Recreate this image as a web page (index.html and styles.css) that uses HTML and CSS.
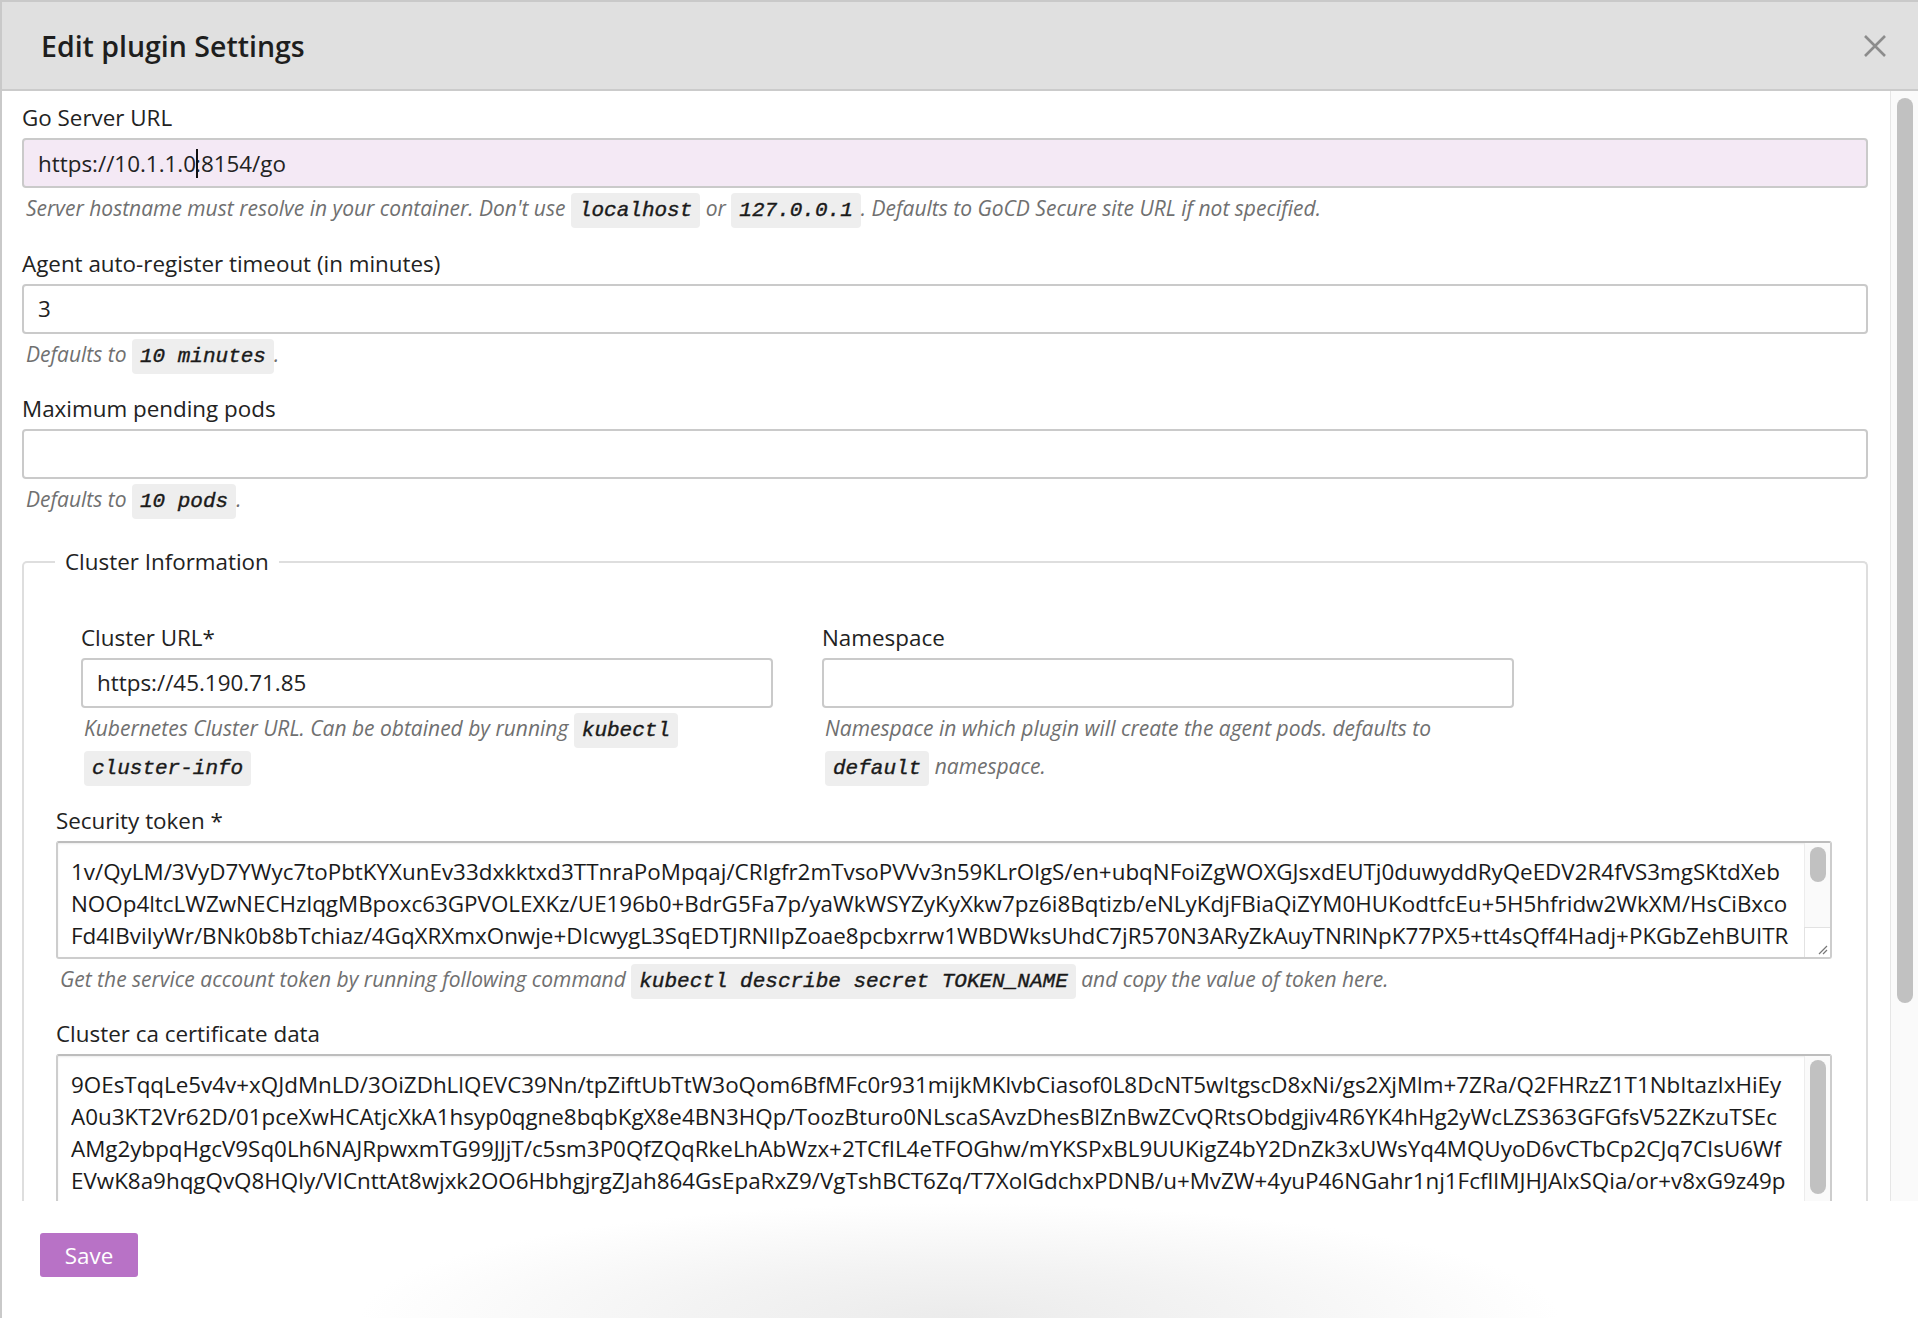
FILE: index.html
```html
<!DOCTYPE html>
<html lang="en">
<head>
<meta charset="utf-8">
<title>Edit plugin Settings</title>
<link rel="stylesheet" href="styles.css">
</head>
<body>
<div class="modal">
  <header class="modal-header">
    <h1 class="modal-title">Edit plugin Settings</h1>
    <button class="close-btn" aria-label="Close">
      <svg width="24" height="24" viewBox="0 0 24 24"><path d="M2 2 L22 22 M22 2 L2 22" stroke="#8c8c8c" stroke-width="2.6" fill="none" stroke-linecap="butt"/></svg>
    </button>
  </header>

  <div class="modal-body">
    <div class="body-content">
      <div class="form-group">
        <label class="field-label">Go Server URL</label>
        <div class="field-box focused"><span>https://10.1.1.0</span><span class="caret"></span><span>:8154/go</span></div>
        <p class="help">Server hostname must resolve in your container. Don't use <code>localhost</code> or <code>127.0.0.1</code>. Defaults to GoCD Secure site URL if not specified.</p>
      </div>

      <div class="form-group">
        <label class="field-label">Agent auto-register timeout (in minutes)</label>
        <div class="field-box">3</div>
        <p class="help">Defaults to <code>10 minutes</code>.</p>
      </div>

      <div class="form-group">
        <label class="field-label">Maximum pending pods</label>
        <div class="field-box"></div>
        <p class="help">Defaults to <code>10 pods</code>.</p>
      </div>

      <fieldset class="cluster">
        <legend class="legend">Cluster Information</legend>
        <div class="cluster-row">
          <div class="col">
            <label class="field-label">Cluster URL*</label>
            <div class="field-box">https://45.190.71.85</div>
            <p class="help">Kubernetes Cluster URL. Can be obtained by running <code>kubectl</code> <code>cluster-info</code></p>
          </div>
          <div class="col">
            <label class="field-label">Namespace</label>
            <div class="field-box"></div>
            <p class="help">Namespace in which plugin will create the agent pods. defaults to <code>default</code> namespace.</p>
          </div>
        </div>

        <div class="form-group">
          <label class="field-label">Security token *</label>
          <div class="textbox token">
            <div class="textbox-text">
              <div class="tline">1v/QyLM/3VyD7YWyc7toPbtKYXunEv33dxkktxd3TTnraPoMpqaj/CRIgfr2mTvsoPVVv3n59KLrOlgS/en+ubqNFoiZgWOXGJsxdEUTj0duwyddRyQeEDV2R4fVS3mgSKtdXeb</div>
              <div class="tline">NOOp4ltcLWZwNECHzlqgMBpoxc63GPVOLEXKz/UE196b0+BdrG5Fa7p/yaWkWSYZyKyXkw7pz6i8Bqtizb/eNLyKdjFBiaQiZYM0HUKodtfcEu+5H5hfridw2WkXM/HsCiBxco</div>
              <div class="tline">Fd4IBviIyWr/BNk0b8bTchiaz/4GqXRXmxOnwje+DIcwygL3SqEDTJRNIIpZoae8pcbxrrw1WBDWksUhdC7jR570N3ARyZkAuyTNRlNpK77PX5+tt4sQff4Hadj+PKGbZehBUITR</div>
            </div>
            <div class="tb-track">
              <div class="tb-thumb short"></div>
              <div class="tb-spacer"></div>
              <div class="resizer">
                <svg width="12" height="12" viewBox="0 0 12 12"><path d="M11 3 L3 11 M11 7 L7 11" stroke="#777" stroke-width="1.2" fill="none"/></svg>
              </div>
            </div>
          </div>
          <p class="help">Get the service account token by running following command <code>kubectl describe secret TOKEN_NAME</code> and copy the value of token here.</p>
        </div>

        <div class="form-group">
          <label class="field-label">Cluster ca certificate data</label>
          <div class="textbox cert">
            <div class="textbox-text">
              <div class="tline">9OEsTqqLe5v4v+xQJdMnLD/3OiZDhLlQEVC39Nn/tpZiftUbTtW3oQom6BfMFc0r931mijkMKlvbCiasof0L8DcNT5wItgscD8xNi/gs2XjMlm+7ZRa/Q2FHRzZ1T1NbItazIxHiEy</div>
              <div class="tline">A0u3KT2Vr62D/01pceXwHCAtjcXkA1hsyp0qgne8bqbKgX8e4BN3HQp/ToozBturo0NLscaSAvzDhesBlZnBwZCvQRtsObdgjiv4R6YK4hHg2yWcLZS363GFGfsV52ZKzuTSEc</div>
              <div class="tline">AMg2ybpqHgcV9Sq0Lh6NAJRpwxmTG99JJjT/c5sm3P0QfZQqRkeLhAbWzx+2TCfIL4eTFOGhw/mYKSPxBL9UUKigZ4bY2DnZk3xUWsYq4MQUyoD6vCTbCp2CJq7CIsU6Wf</div>
              <div class="tline">EVwK8a9hqgQvQ8HQly/VICnttAt8wjxk2OO6HbhgjrgZJah864GsEpaRxZ9/VgTshBCT6Zq/T7XolGdchxPDNB/u+MvZW+4yuP46NGahr1nj1FcflIMJHJAlxSQia/or+v8xG9z49p</div>
            </div>
            <div class="tb-track">
              <div class="tb-thumb long"></div>
            </div>
          </div>
        </div>
      </fieldset>
    </div>
    <div class="scroll-track"><div class="scroll-thumb"></div></div>
  </div>

  <footer class="modal-footer">
    <button class="save-btn">Save</button>
  </footer>
</div>
</body>
</html>
```
FILE: styles.css
```css
* { box-sizing: border-box; }
html, body { margin: 0; padding: 0; background: #fff; }
body {
  font-family: "Open Sans", "Noto Sans", sans-serif;
  color: #222;
  width: 1918px;
  height: 1318px;
  overflow: hidden;
}
.modal {
  width: 1918px;
  height: 1318px;
  border-left: 2px solid #c9c9c9;
  border-top: 2px solid #c9c9c9;
  display: flex;
  flex-direction: column;
  background: #fff;
}
.modal-header {
  flex: 0 0 89px;
  background: #e0e0e0;
  border-bottom: 2px solid #cbcbcb;
  display: flex;
  align-items: center;
  justify-content: space-between;
  padding: 0 31px 0 39px;
}
.modal-title {
  margin: 0;
  font-size: 28.5px;
  font-weight: 600;
  color: #1e1e1e;
}
.close-btn {
  border: 0;
  background: transparent;
  padding: 0;
  width: 24px;
  height: 24px;
  display: flex;
}
.modal-body {
  flex: 0 0 1110px;
  display: flex;
  overflow: hidden;
}
.body-content {
  flex: 1;
  overflow: hidden;
  padding: 13px 22px 0 20px;
}
.scroll-track {
  flex: 0 0 28px;
  border-left: 1px solid #e6e6e6;
  background: #fafafa;
  padding: 7px 5px 0 6px;
}
.scroll-thumb {
  height: 905px;
  border-radius: 8px;
  background: #c1c1c1;
}
.form-group { margin-bottom: 22px; }
.field-label {
  display: block;
  font-size: 22.4px;
  line-height: 28px;
  margin-bottom: 6px;
  color: #222;
}
.field-box {
  height: 50px;
  border: 2px solid #cacaca;
  border-radius: 4px;
  background: #fff;
  font-size: 22.4px;
  color: #222;
  display: flex;
  align-items: center;
  padding: 0 14px;
  white-space: pre;
}
.field-box.focused { background: #f4e9f5; }
.caret {
  display: inline-block;
  width: 2px;
  height: 29px;
  background: #111;
  margin-right: -3px;
  position: relative;
  z-index: 1;
}
.help {
  margin: 1px 0 0;
  font-size: 21px;
  line-height: 38.5px;
  font-style: italic;
  color: #707070;
  padding-left: 4px;
}
code {
  font-family: "Liberation Mono", "Courier New", monospace;
  font-style: italic;
  font-weight: normal;
  -webkit-text-stroke: 0.4px #1a1a1a;
  font-size: 21px;
  line-height: 1;
  color: #1a1a1a;
  background: #eeeeee;
  border-radius: 4px;
  padding: 6px 8px;
  white-space: nowrap;
}
.cluster {
  margin: 29px 0 0;
  border: 2px solid #dedede;
  border-bottom: 0;
  border-radius: 5px 5px 0 0;
  padding: 0 34px 0 32px;
  min-width: 0;
}
.legend {
  font-size: 22.4px;
  line-height: 28px;
  padding: 0 10px;
  margin-left: -1px;
  color: #222;
}
.cluster-row {
  display: grid;
  grid-template-columns: 692px 692px;
  column-gap: 49px;
  margin-top: 48px;
  padding-left: 25px;
  margin-bottom: 21px;
}
.cluster-row .help { padding-left: 3px; }
.textbox {
  border: 2px solid #cdcdcd;
  border-top-color: #bdbdbd;
  border-radius: 3px;
  display: flex;
  background: #fff;
  box-shadow: inset 0 1px 2px rgba(0,0,0,0.08);
}
.textbox.token { height: 118px; }
.textbox.cert { height: 190px; }
.textbox-text {
  flex: 1;
  overflow: hidden;
  padding: 13px 0 0 13px;
  font-size: 22.4px;
  line-height: 32px;
  color: #1a1a1a;
}
.tline { white-space: pre; overflow: hidden; }
.tb-track {
  flex: 0 0 26px;
  background: #fafafa;
  border-left: 1px solid #ececec;
  display: flex;
  flex-direction: column;
  padding: 4px 4px 0 5px;
}
.tb-thumb {
  background: #c1c1c1;
  border-radius: 8px;
}
.tb-thumb.short { height: 35px; }
.tb-thumb.long { height: 134px; }
.tb-spacer { flex: 1; }
.resizer {
  height: 30px;
  margin: 0 -4px 0 -6px;
  border-top: 1px solid #e2e2e2;
  border-left: 1px solid #e2e2e2;
  background: #fff;
  display: flex;
  align-items: flex-end;
  justify-content: flex-end;
  padding: 0 2px 2px 0;
}
.modal-footer {
  flex: 1;
  padding: 32px 0 0 38px;
  background:
    radial-gradient(ellipse 600px 115px at 50% 100%, #ebebeb 0%, #f3f3f3 45%, rgba(255,255,255,0) 100%);
}
.save-btn {
  width: 98px;
  height: 44px;
  border: 0;
  border-radius: 3px;
  background: #b872c6;
  color: #fff;
  font-family: "Open Sans", sans-serif;
  font-size: 22.4px;
  padding: 0;
}
```
